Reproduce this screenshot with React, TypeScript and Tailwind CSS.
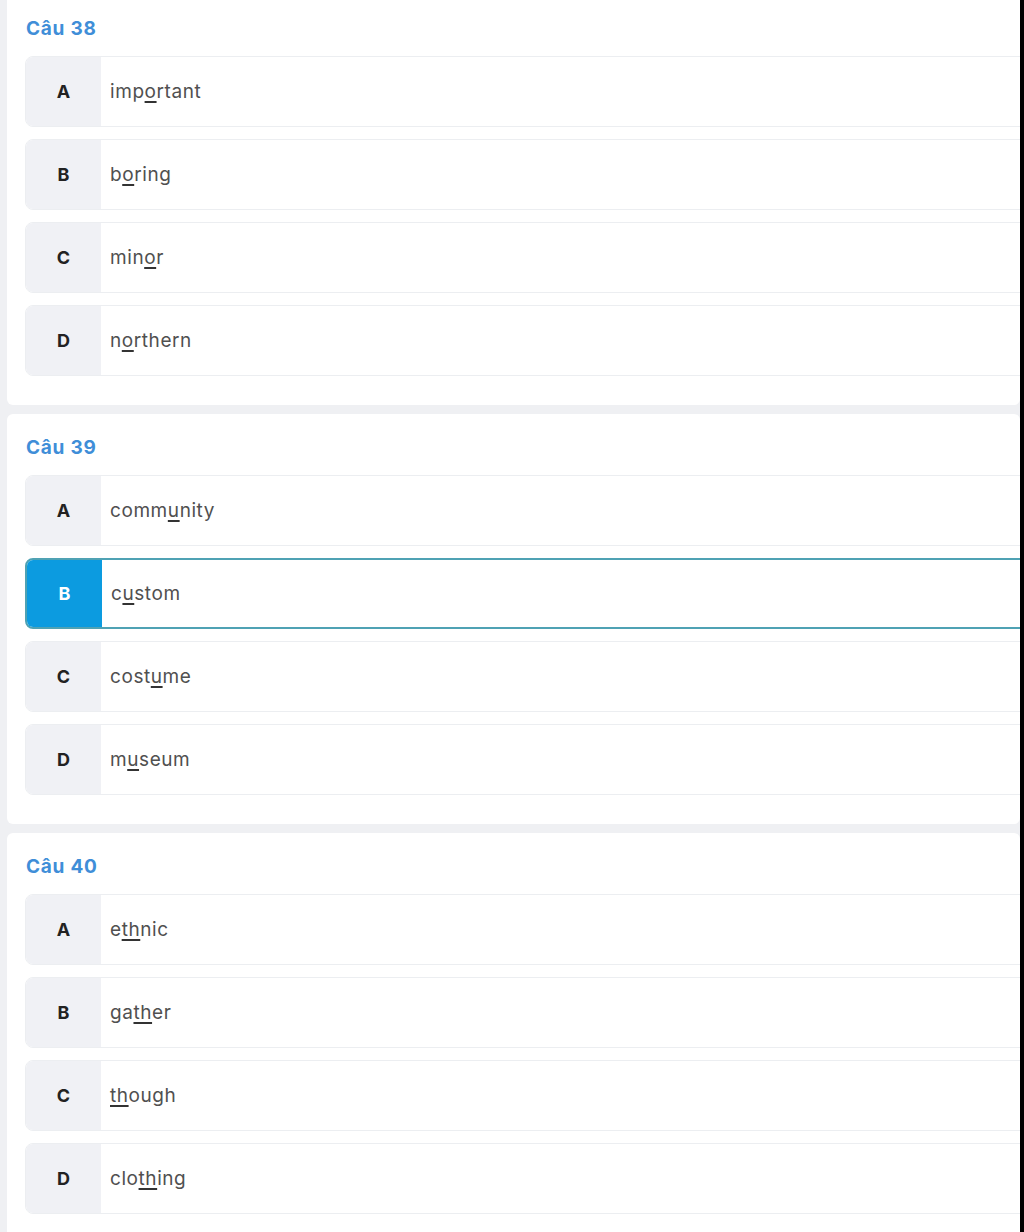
import React from 'react';

// Một phần của từ: chữ thường hoặc chữ được gạch chân
type Part = { t: string; u?: boolean };

interface Option {
  key: string;
  parts: Part[];
  selected?: boolean;
}

interface Question {
  title: string;
  options: Option[];
}

const questions: Question[] = [
  {
    title: 'Câu 38',
    options: [
      { key: 'A', parts: [{ t: 'imp' }, { t: 'o', u: true }, { t: 'rtant' }] },
      { key: 'B', parts: [{ t: 'b' }, { t: 'o', u: true }, { t: 'ring' }] },
      { key: 'C', parts: [{ t: 'min' }, { t: 'o', u: true }, { t: 'r' }] },
      { key: 'D', parts: [{ t: 'n' }, { t: 'o', u: true }, { t: 'rthern' }] },
    ],
  },
  {
    title: 'Câu 39',
    options: [
      { key: 'A', parts: [{ t: 'comm' }, { t: 'u', u: true }, { t: 'nity' }] },
      { key: 'B', parts: [{ t: 'c' }, { t: 'u', u: true }, { t: 'stom' }], selected: true },
      { key: 'C', parts: [{ t: 'cost' }, { t: 'u', u: true }, { t: 'me' }] },
      { key: 'D', parts: [{ t: 'm' }, { t: 'u', u: true }, { t: 'seum' }] },
    ],
  },
  {
    title: 'Câu 40',
    options: [
      { key: 'A', parts: [{ t: 'e' }, { t: 'th', u: true }, { t: 'nic' }] },
      { key: 'B', parts: [{ t: 'ga' }, { t: 'th', u: true }, { t: 'er' }] },
      { key: 'C', parts: [{ t: 'th', u: true }, { t: 'ough' }] },
      { key: 'D', parts: [{ t: 'clo' }, { t: 'th', u: true }, { t: 'ing' }] },
    ],
  },
];

function OptionRow({ option }: { option: Option }) {
  const sel = option.selected;
  return (
    <div
      className={`flex h-[71px] -mr-6 rounded-lg overflow-hidden ${
        sel ? 'border-2 border-[#4fa2b4]' : 'border border-[#eceef1]'
      }`}
    >
      <div
        className={`w-[75px] shrink-0 flex items-center justify-center text-[18px] font-bold ${
          sel ? 'bg-[#0c9be0] text-white' : 'bg-[#f0f1f5] text-[#222]'
        }`}
      >
        {option.key}
      </div>
      <div className="flex-1 flex items-center pl-[9px] pt-[2px] bg-white text-[19px] tracking-[0.03em] text-[#505050]">
        <span>
          {option.parts.map((p, i) =>
            p.u ? (
              <span key={i} className="underline decoration-[#333] decoration-[1.5px] underline-offset-[3px]">
                {p.t}
              </span>
            ) : (
              <span key={i}>{p.t}</span>
            )
          )}
        </span>
      </div>
    </div>
  );
}

export default function App() {
  return (
    <div
      className="flex w-[1024px] h-[1232px] overflow-hidden bg-[#eff0f3]"
      style={{ fontFamily: 'Inter, "Noto Sans", "Liberation Sans", sans-serif' }}
    >
      <div className="flex-1 min-w-0 pl-[7px] overflow-hidden">
        <div className="flex flex-col gap-[9px] -mt-[5px]">
          {questions.map((q) => (
            <div key={q.title} className="bg-white rounded-md pt-[22px] pb-[29px] pl-[18px]">
              <div className="h-[24px] flex items-center text-[19px] font-bold tracking-[0.04em] text-[#3f8ed8] pl-[1px]">
                {q.title}
              </div>
              <div className="mt-[15px] flex flex-col gap-[12px]">
                {q.options.map((o) => (
                  <OptionRow key={o.key} option={o} />
                ))}
              </div>
            </div>
          ))}
        </div>
      </div>
      {/* thanh cuộn bên phải */}
      <div className="w-[4px] shrink-0 bg-black" />
    </div>
  );
}
